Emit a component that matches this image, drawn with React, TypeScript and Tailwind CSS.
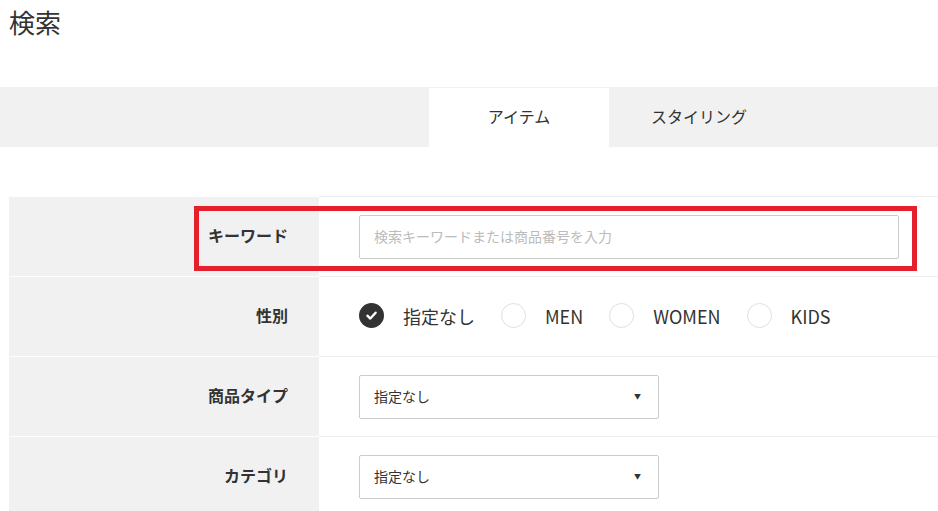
import React from "react";

const font = { fontFamily: '"Noto Sans CJK JP", "Noto Sans", sans-serif' };

function Radio({ checked, label }: { checked?: boolean; label: string }) {
  return (
    <div className="flex items-center">
      {checked ? (
        <span className="flex h-[25px] w-[25px] items-center justify-center rounded-full bg-[#333333]">
          <svg width="13" height="13" viewBox="0 0 12 12">
            <path d="M2.2 6.2 L4.9 8.8 L9.8 3.4" fill="none" stroke="#ffffff" strokeWidth="2.2" strokeLinecap="round" strokeLinejoin="round" />
          </svg>
        </span>
      ) : (
        <span className="h-[25px] w-[25px] rounded-full border border-[#e0e0e0] bg-white" />
      )}
      <span className="ml-[19px] text-[18px] leading-[24px] text-[#333333]">{label}</span>
    </div>
  );
}

function Select() {
  return (
    <div className="flex h-[44px] w-[300px] items-center justify-between rounded-[2px] border border-[#cccccc] bg-white pl-[14px] pr-[17px]">
      <span className="text-[14px] text-[#333333]">指定なし</span>
      <span className="text-[7px] text-[#333333]">▼</span>
    </div>
  );
}

function Row({ label, children }: { label: string; children: React.ReactNode }) {
  return (
    <div className="flex h-[80px]">
      <div className="flex w-[310px] shrink-0 items-center justify-end border-t border-white bg-[#f1f1f1] pb-[3px] pr-[31px]">
        <span className="text-[16px] font-bold text-[#333333]">{label}</span>
      </div>
      <div className="flex flex-1 items-center border-t border-[#eeeeee] pl-[40px]">{children}</div>
    </div>
  );
}

export default function App() {
  return (
    <div className="h-[511px] w-[938px] overflow-hidden bg-white" style={font}>
      <div className="pl-[9px] pt-[5px] text-[26px] leading-[34px] text-[#333333]">検索</div>
      <div className="mt-[48px] flex h-[60px] bg-[#f1f1f1] pl-[429px]">
        <div className="mt-[1px] flex w-[180px] items-center justify-center bg-white pb-[3px] text-[16px] text-[#333333]">アイテム</div>
        <div className="flex w-[180px] items-center justify-center pb-[3px] text-[16px] text-[#333333]">スタイリング</div>
      </div>
      <div className="relative ml-[9px] mt-[49px] w-[929px]">
        <Row label="キーワード">
          <div className="flex h-[44px] w-[540px] items-center rounded-[2px] border border-[#cccccc] bg-white pl-[14px] text-[14px] text-[#bbbbbb]">
            検索キーワードまたは商品番号を入力
          </div>
        </Row>
        <Row label="性別">
          <div className="flex items-center gap-[26px] pb-[2px]">
            <Radio checked label="指定なし" />
            <Radio label="MEN" />
            <Radio label="WOMEN" />
            <Radio label="KIDS" />
          </div>
        </Row>
        <Row label="商品タイプ">
          <Select />
        </Row>
        <Row label="カテゴリ">
          <Select />
        </Row>
        <div className="pointer-events-none absolute left-[185px] top-[10px] h-[65px] w-[723px] border-[5px] border-[#e3202c]" />
      </div>
    </div>
  );
}
